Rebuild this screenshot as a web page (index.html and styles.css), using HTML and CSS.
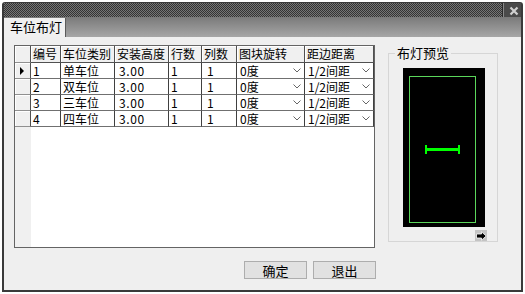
FILE: index.html
```html
<!DOCTYPE html>
<html lang="zh-CN">
<head>
<meta charset="UTF-8" />
<title>车位布灯</title>
<link rel="stylesheet" href="styles.css">
</head>
<body>
  <div class="win">
    <div class="titlebar">
      <div class="grip"></div>
      <div class="close">
        <svg width="10" height="10" viewBox="0 0 10 10"><path d="M1.5 1.5 L8.5 8.5 M8.5 1.5 L1.5 8.5" stroke="#d0d0d0" stroke-width="2.2"/></svg>
      </div>
    </div>
    <div class="tabs">
      <div class="tab">车位布灯</div>
    </div>
    <div class="panel">
      <div class="content">
        <div class="grid">
          <div class="hd ind"></div>
          <div class="hd">编号</div>
          <div class="hd">车位类别</div>
          <div class="hd">安装高度</div>
          <div class="hd">行数</div>
          <div class="hd">列数</div>
          <div class="hd">图块旋转</div>
          <div class="hd">距边距离</div>

          <div class="ind cur"><span class="tri"></span></div>
          <div class="c">1</div><div class="c">单车位</div><div class="c num">3.00</div><div class="c">1</div><div class="c pad">1</div>
          <div class="c sel">0度<svg width="8" height="5" viewBox="0 0 8 5"><path d="M0.5 0.5 L4 4 L7.5 0.5" fill="none" stroke="#666"/></svg></div>
          <div class="c sel">1/2间距<svg width="8" height="5" viewBox="0 0 8 5"><path d="M0.5 0.5 L4 4 L7.5 0.5" fill="none" stroke="#666"/></svg></div>

          <div class="ind"></div>
          <div class="c">2</div><div class="c">双车位</div><div class="c num">3.00</div><div class="c">1</div><div class="c pad">1</div>
          <div class="c sel">0度<svg width="8" height="5" viewBox="0 0 8 5"><path d="M0.5 0.5 L4 4 L7.5 0.5" fill="none" stroke="#666"/></svg></div>
          <div class="c sel">1/2间距<svg width="8" height="5" viewBox="0 0 8 5"><path d="M0.5 0.5 L4 4 L7.5 0.5" fill="none" stroke="#666"/></svg></div>

          <div class="ind"></div>
          <div class="c">3</div><div class="c">三车位</div><div class="c num">3.00</div><div class="c">1</div><div class="c pad">1</div>
          <div class="c sel">0度<svg width="8" height="5" viewBox="0 0 8 5"><path d="M0.5 0.5 L4 4 L7.5 0.5" fill="none" stroke="#666"/></svg></div>
          <div class="c sel">1/2间距<svg width="8" height="5" viewBox="0 0 8 5"><path d="M0.5 0.5 L4 4 L7.5 0.5" fill="none" stroke="#666"/></svg></div>

          <div class="ind"></div>
          <div class="c">4</div><div class="c">四车位</div><div class="c num">3.00</div><div class="c">1</div><div class="c pad">1</div>
          <div class="c sel">0度<svg width="8" height="5" viewBox="0 0 8 5"><path d="M0.5 0.5 L4 4 L7.5 0.5" fill="none" stroke="#666"/></svg></div>
          <div class="c sel">1/2间距<svg width="8" height="5" viewBox="0 0 8 5"><path d="M0.5 0.5 L4 4 L7.5 0.5" fill="none" stroke="#666"/></svg></div>
        </div>

        <div class="group">
          <span class="group-title">布灯预览</span>
          <div class="preview">
            <div class="frame">
              <div class="bar"></div>
            </div>
          </div>
          <div class="arrow-row">
            <div class="arrow">
              <svg width="11" height="10" viewBox="0 0 11 10"><path d="M0.5 3 H5.5 V0.8 L10.2 5 L5.5 9.2 V7 H0.5 Z" fill="#000" stroke="#fff" stroke-width="0.8"/></svg>
            </div>
          </div>
        </div>
      </div>

      <div class="buttons">
        <button class="btn">确定</button>
        <button class="btn">退出</button>
      </div>
    </div>
  </div>
</body>
</html>
```

FILE: styles.css
```css
/* Dialog base */
* {
  box-sizing: border-box;
}
body {
  margin: 0;
  background: #fff;
  font-family: "Noto Sans CJK SC", "Noto Sans", sans-serif;
  font-size: 12px;
  color: #000;
}

.win {
  margin: 2px 0 0 2px;
  width: 521px;
  height: 290px;
  border: 2px solid #3a3a3a;
  border-top-width: 1px;
  border-radius: 3px 3px 0 0;
  display: flex;
  flex-direction: column;
  background: #efefef;
}

/* Title bar */
.titlebar {
  height: 14px;
  display: flex;
  background: #4a4a4a;
}
.grip {
  flex: 1;
  background: repeating-conic-gradient(#343434 0 25%, #767676 0 50%) 0 0 / 2px 2px;
  border-right: 1px solid #2a2a2a;
  box-shadow: 1px 0 0 #8a8a8a;
  margin-right: 3px;
}
.close {
  width: 15px;
  display: flex;
  align-items: center;
  justify-content: center;
  padding-top: 2px;
}

/* Tab strip */
.tabs {
  height: 20px;
  display: flex;
  align-items: flex-end;
  background: linear-gradient(#7a7a7a, #a6a6a6);
}
.tab {
  width: 62px;
  height: 19px;
  background: #f0f0f0;
  border-right: 1px solid #5a5a5a;
  font-size: 13px;
  line-height: 18px;
  padding-left: 6px;
}

.panel {
  flex: 1;
  padding: 8px 0 0 10px;
}
.content {
  display: flex;
  gap: 13px;
}

/* Data grid */
.grid {
  width: 361px;
  height: 203px;
  border: 1px solid #646464;
  display: grid;
  grid-template-columns: 16px 30px 54px 54px 33px 35px 68px 69px;
  grid-template-rows: 17px repeat(4, 16px);
  align-content: start;
  background: linear-gradient(to right, #f0f0f0 16px, #fff 16px);
}
.hd {
  background: #f0f0f0;
  border-right: 1px solid #505050;
  border-bottom: 1px solid #505050;
  box-shadow: inset 1px 1px #fff;
  line-height: 16px;
  padding-left: 2px;
  white-space: nowrap;
  overflow: hidden;
}
.ind {
  background: #f0f0f0;
  border-right: 1px solid #505050;
  border-bottom: 1px solid #909090;
  box-shadow: inset 1px 1px #fff;
  display: flex;
  align-items: center;
  padding-left: 5px;
}
.tri {
  width: 0;
  height: 0;
  border-top: 4px solid transparent;
  border-bottom: 4px solid transparent;
  border-left: 4px solid #000;
}
.c {
  background: #fff;
  border-right: 1px solid #404040;
  border-bottom: 1px solid #707070;
  line-height: 15px;
  padding-left: 2px;
  white-space: nowrap;
}
.c.num {
  padding-left: 4px;
  letter-spacing: 0.6px;
}
.c.pad {
  padding-left: 5px;
}
.c.sel {
  display: flex;
  align-items: center;
  justify-content: space-between;
  padding: 0 3px 0 3px;
}

/* Preview group */
.group {
  position: relative;
  width: 110px;
  height: 189px;
  margin-top: 8px;
  border: 1px solid #d6d6d6;
  padding: 14px 0 0 14px;
  display: flex;
  flex-direction: column;
}
.group-title {
  position: absolute;
  top: -9px;
  left: 6px;
  padding: 0 2px;
  background: #efefef;
  font-size: 13px;
  line-height: 16px;
}
.preview {
  width: 82px;
  height: 160px;
  background: #000;
  padding: 8px 0 0 6px;
}
.frame {
  width: 67px;
  height: 147px;
  border: 1px solid #5ad65a;
  display: flex;
  align-items: center;
  justify-content: center;
}
.bar {
  width: 35px;
  height: 9px;
  border-left: 2px solid #00ff00;
  border-right: 2px solid #00ff00;
  background: linear-gradient(transparent 3px, #00ff00 3px, #00ff00 6px, transparent 6px);
}
.arrow-row {
  display: flex;
  justify-content: flex-end;
  padding: 3px 10px 0 0;
}
.arrow {
  width: 12px;
  height: 11px;
  background: #c4c4c4;
  display: flex;
  align-items: center;
  justify-content: center;
}

/* Buttons */
.buttons {
  display: flex;
  gap: 6px;
  margin-top: 13px;
  padding-left: 230px;
}
.btn {
  width: 63px;
  height: 18px;
  border: 1px solid #adadad;
  background: #e1e1e1;
  font-family: inherit;
  font-size: 13px;
  line-height: 15px;
  padding: 0;
  color: #000;
}
```
